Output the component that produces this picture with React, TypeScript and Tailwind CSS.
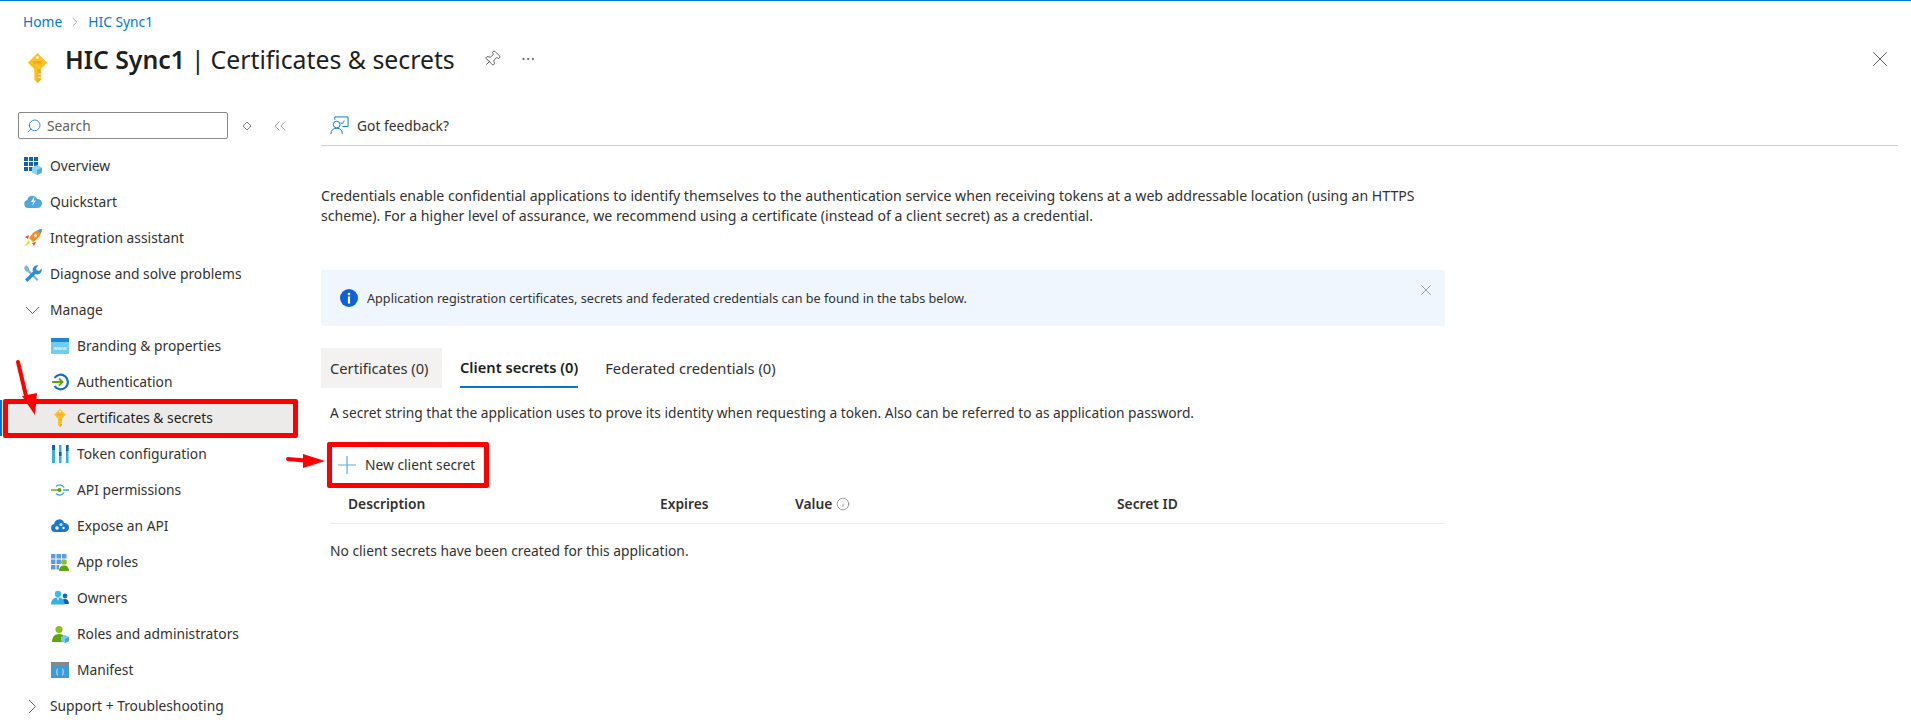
import { ChevronRight, ChevronsLeft, Info, MoreHorizontal, Pin, Search, X } from "lucide-react"
import type { ReactNode } from "react"

function KeyIcon({ className }: { className: string }) {
  return (
    <svg viewBox="0 0 18 28" className={className}>
      <path d="M9 0 L18 9 L12 15 V25 L9 28 L6 25 V15 L0 9 Z" fill="#fdc11f" />
      <path d="M9 15 H12 V25 L9 28 Z" fill="#f2a81d" />
      <path d="M12 19 H9.5 V20.5 H12 V22 H9.5 V23.5 H12 Z" fill="#fff" opacity="0.6" />
      <rect x="5" y="7.5" width="8" height="2.5" fill="#f2a81d" />
      <circle cx="9" cy="4.2" r="1.4" fill="#fff" />
    </svg>
  )
}

const icons: Record<string, ReactNode> = {
  overview: (
    <svg viewBox="0 0 18 18" className="h-[18px] w-[18px]">
      <path d="M0 0h4v4H0zM5 0h4v4H5zM10 0h4v4h-4zM0 5h4v4H0zM5 5h4v4H5zM10 5h4v4h-4zM0 10h4v4H0zM5 10h4v4H5z" fill="#0f5fb5" />
      <path d="M13 8l5 2.5v5L13 18l-5-2.5v-5z" fill="#8ed6ee" />
      <path d="M13 13l5-2.5v5L13 18z" fill="#50b0dc" />
    </svg>
  ),
  quickstart: (
    <svg viewBox="0 0 18 18" className="h-[18px] w-[18px]">
      <path d="M4 15a4 4 0 0 1-.6-7.9A5 5 0 0 1 13 6a4.5 4.5 0 0 1 1 9z" fill="#50a8d8" />
      <path d="M10.5 3 7 9h2.5L8 13l4-5.5H9.7z" fill="#fff" />
    </svg>
  ),
  rocket: (
    <svg viewBox="0 0 18 18" className="h-[18px] w-[18px]">
      <path d="M18 0c-4 .4-7 1.800-9.500 4.500L5 9l4 4 4.500-3.500C16.200 7 17.600 4 18 0z" fill="#f78d1e" />
      <path d="M18 0c-1.500.2-3 .6-4.200 1.300l2.900 2.900C17.400 3 17.800 1.500 18 0z" fill="#2f9fd8" />
      <circle cx="11.500" cy="6.500" r="1.500" fill="#fff" />
      <path d="M5 6 1 8l3 2zM12 13l-2 4-2-3z" fill="#d9541e" />
      <path d="M4.500 11.500 0 18l6.500-4.500z" fill="#fcd116" />
    </svg>
  ),
  wrench: (
    <svg viewBox="0 0 18 18" className="h-[18px] w-[18px]">
      <path d="M2 0 5 3v2L14.500 14.500 13 16 3.500 6.500H2L0 3z" fill="#78b4d8" />
      <path d="M17.500 3.500 15 6l-2.300-.7L12 3l2.500-2.500A4.500 4.500 0 0 0 9 6.500L1 14.500 3.500 17 11.500 9a4.500 4.500 0 0 0 6-5.500z" fill="#2f8fc8" />
    </svg>
  ),
  branding: (
    <svg viewBox="0 0 18 18" className="h-[18px] w-[18px]">
      <rect y="1" width="18" height="16" rx="1" fill="#6fcdf0" />
      <rect y="1" width="18" height="4" fill="#1f85d6" />
      <text x="9" y="13" textAnchor="middle" fontSize="6" fill="#fff" fontFamily="Liberation Sans, sans-serif">www</text>
    </svg>
  ),
  auth: (
    <svg viewBox="0 0 18 18" className="h-[18px] w-[18px]" fill="none">
      <path d="M3.500 5A7.300 7.300 0 1 1 3.500 13" stroke="#0f6fc6" strokeWidth="2.200" />
      <path d="M1 9h10M8 5.500 11.500 9 8 12.500" stroke="#5ea50a" strokeWidth="1.800" />
    </svg>
  ),
  key: <KeyIcon className="h-[18px] w-3" />,
  token: (
    <svg viewBox="0 0 18 18" className="h-[18px] w-[18px]">
      <path d="M1 0h3v18H1zM8 0h2.500v18H8zM15 0h2.500v18H15z" fill="#32b0e7" />
      <path d="M1 0h3v5H1zM8 7h2.500v4H8zM15 0h2.500v6H15z" fill="#0f5fb5" />
    </svg>
  ),
  api: (
    <svg viewBox="0 0 18 18" className="h-[18px] w-[18px]" fill="none">
      <path d="M0 9h8" stroke="#5ea50a" strokeWidth="1.400" />
      <path d="M12 9h6" stroke="#32a0d8" strokeWidth="1.400" />
      <circle cx="8.500" cy="9" r="2" fill="#5ea50a" />
      <path d="M5 5.500a5 5 0 0 1 8 1M5 12.500a5 5 0 0 0 8-1" stroke="#32a0d8" strokeWidth="1.300" />
    </svg>
  ),
  expose: (
    <svg viewBox="0 0 18 18" className="h-[18px] w-[18px]">
      <path d="M4 15a4 4 0 0 1-.8-7.900A5 5 0 0 1 13 6a4.500 4.500 0 0 1 1 9z" fill="#1a78d0" />
      <circle cx="6" cy="11" r="1.800" fill="#fff" />
      <circle cx="10" cy="7.500" r="1.600" fill="#bfe3f7" />
      <circle cx="12.500" cy="11" r="1.200" fill="#fff" />
    </svg>
  ),
  approles: (
    <svg viewBox="0 0 18 18" className="h-[18px] w-[18px]">
      <path d="M0 1h4.500v4.500H0zM5.500 1H10v4.500H5.500zM11 1h4.500v4.500H11zM0 6.500h4.500V11H0zM5.500 6.500H10V11H5.500zM0 12h4.500v4.500H0zM5.500 12H8v4.500H5.500z" fill="#5a9bec" />
      <circle cx="13" cy="9" r="2.800" fill="#86c21c" />
      <path d="M8 18c0-3.500 2-5.500 5-5.500s5 2 5 5.500z" fill="#5ea50a" />
    </svg>
  ),
  owners: (
    <svg viewBox="0 0 18 18" className="h-[18px] w-[18px]">
      <circle cx="14" cy="7" r="2.400" fill="#0f6fc6" />
      <path d="M10 15c0-3 1.500-5 4-5s4 2 4 5z" fill="#0f5fb5" />
      <circle cx="7" cy="5" r="3.200" fill="#38bdf0" />
      <path d="M0 15.500C0 11 2.500 8.500 7 8.500s6.500 2.500 6.500 7z" fill="#32b0e7" />
      <path d="M6 9h2l-1 3z" fill="#fff" />
    </svg>
  ),
  roles: (
    <svg viewBox="0 0 18 18" className="h-[18px] w-[18px]">
      <circle cx="8" cy="4.500" r="3.600" fill="#86c21c" />
      <path d="M1 17c0-5 2.500-8 7-8s7 3 7 8z" fill="#5ea50a" />
      <path d="M14 10l4 2v4l-4 2-4-2v-4z" fill="#72cdf0" />
      <path d="M14 14l4-2v4l-4 2z" fill="#38a8dc" />
    </svg>
  ),
  manifest: (
    <svg viewBox="0 0 18 18" className="h-[18px] w-[18px]">
      <rect y="1" width="18" height="16" fill="#3e9ad8" />
      <rect y="1" width="18" height="3.500" fill="#8a8886" />
      <path d="M7 8c-1 0-1 .5-1 1.500S6 11 5.500 11c.5 0 .5.500.5 1.500S6 14 7 14M11 8c1 0 1 .5 1 1.500s0 1.500.5 1.500c-.5 0-.5.500-.5 1.500S12 14 11 14" fill="none" stroke="#fff" strokeWidth=".8" />
    </svg>
  ),
}

type NavItem = { label: string; icon?: string; sub?: boolean; active?: boolean; caret?: "down" | "right" }

const navItems: NavItem[] = [
  { label: "Overview", icon: "overview" },
  { label: "Quickstart", icon: "quickstart" },
  { label: "Integration assistant", icon: "rocket" },
  { label: "Diagnose and solve problems", icon: "wrench" },
  { label: "Manage", caret: "down" },
  { label: "Branding & properties", icon: "branding", sub: true },
  { label: "Authentication", icon: "auth", sub: true },
  { label: "Certificates & secrets", icon: "key", sub: true, active: true },
  { label: "Token configuration", icon: "token", sub: true },
  { label: "API permissions", icon: "api", sub: true },
  { label: "Expose an API", icon: "expose", sub: true },
  { label: "App roles", icon: "approles", sub: true },
  { label: "Owners", icon: "owners", sub: true },
  { label: "Roles and administrators", icon: "roles", sub: true },
  { label: "Manifest", icon: "manifest", sub: true },
  { label: "Support + Troubleshooting", caret: "right" },
]

function NavRow({ item }: { item: NavItem }) {
  const indent = item.active ? "border-l-2 border-[#0078d4] bg-[#edebe9] pl-[48px]" : item.sub ? "pl-[50px]" : "pl-[23px]"
  return (
    <div className={`relative flex h-9 w-[298px] items-center ${indent}`}>
      <span className="mr-[8px] flex w-[19px] shrink-0 items-center justify-center">
        {item.caret === "down" && (
          <svg viewBox="0 0 15 15" className="h-[15px] w-[15px]" fill="none" stroke="#605e5c" strokeWidth="1">
            <path d="M1 4l6.500 6.500L14 4" />
          </svg>
        )}
        {item.caret === "right" && (
          <svg viewBox="0 0 15 15" className="h-[15px] w-[15px]" fill="none" stroke="#605e5c" strokeWidth="1">
            <path d="M4 1l6.500 6.500L4 14" />
          </svg>
        )}
        {item.icon && icons[item.icon]}
      </span>
      <span className={item.active ? "text-[#201f1e]" : "text-[#323130]"}>{item.label}</span>
      {item.active && (
        <div className="pointer-events-none absolute top-[-1px] left-[1px] h-[39px] w-[295px] rounded-[2px] border-[5px] border-[#ff0000]" />
      )}
    </div>
  )
}

export default function App() {
  return (
    <div className="flex h-screen flex-col overflow-hidden border-t border-[#0078d4] bg-white font-['Noto_Sans',sans-serif] text-[13.8px] leading-5 text-[#323130]">
      <div className="flex h-[36px] items-center gap-[6px] pt-[6px] pl-[23px] text-[#0078d4]">
        <span>Home</span>
        <ChevronRight className="h-[14px] w-[14px] text-[#605e5c]" strokeWidth={1} />
        <span>HIC Sync1</span>
      </div>

      <div className="flex h-[44px] items-center pr-[18px] pl-[27px]">
        <KeyIcon className="mt-[18px] mr-[17px] h-[30px] w-[21px]" />
        <h1 className="text-[24.8px] leading-8 whitespace-nowrap text-[#201f1e]">
          <span className="font-semibold">HIC Sync1</span>
          <span className="mx-[6px]">|</span>
          <span>Certificates &amp; secrets</span>
        </h1>
        <Pin className="ml-[28px] h-[18px] w-[18px] rotate-45 text-[#323130]" strokeWidth={1} />
        <MoreHorizontal className="ml-[19px] h-4 w-4 text-[#323130]" strokeWidth={1} />
        <X className="ml-auto h-[26px] w-[26px] text-[#323130]" strokeWidth={0.75} />
      </div>

      <div className="mt-[31px] flex flex-1">
        <aside className="w-[321px] shrink-0">
          <div className="mb-[9px] flex h-[27px] items-center pl-[18px]">
            <div className="flex h-[27px] w-[210px] items-center gap-[5px] rounded-[2px] border border-[#8a8886] pl-[7px] text-[#605e5c]">
              <Search className="h-[16px] w-[16px] -scale-x-100 text-[#0078d4]" strokeWidth={1.25} />
              <span>Search</span>
            </div>
            <svg viewBox="0 0 10 10" className="ml-[14px] h-[10px] w-[10px]" fill="none" stroke="#605e5c" strokeWidth=".8">
              <path d="M5 1 9 5 5 9 1 5z" />
            </svg>
            <ChevronsLeft className="ml-[18px] h-5 w-5 text-[#605e5c]" strokeWidth={0.75} />
          </div>
          <nav>
            {navItems.map((item) => (
              <NavRow key={item.label} item={item} />
            ))}
          </nav>
        </aside>

        <main className="w-[1577px]">
          <div className="flex h-[34px] items-start gap-[8px] border-b border-[#d2d0ce] pt-[4px] pl-[9px]">
            <svg viewBox="0 0 20 20" className="h-[19px] w-[19px]" fill="none" stroke="#0078d4" strokeWidth="1">
              <path d="M5 4V1h14v10h-6M15 5l-2 3-2-1" />
              <circle cx="7" cy="9" r="3.500" />
              <path d="M1 19c0-4 2-6 6-6s6 2 6 6" />
            </svg>
            <span>Got feedback?</span>
          </div>

          <p className="mt-[40px] w-[1124px] text-[14.1px]">
            Credentials enable confidential applications to identify themselves to the authentication service when receiving tokens at a web addressable location (using an HTTPS scheme). For a higher level of assurance, we recommend using a certificate (instead of a client secret) as a credential.
          </p>

          <div className="mt-[44px] flex h-14 w-[1124px] items-center rounded-[2px] bg-[#eff6fe] pr-[10px] pl-[19px] text-[12.65px]">
            <svg viewBox="0 0 18 18" className="mr-[9px] h-[18px] w-[18px]">
              <circle cx="9" cy="9" r="9" fill="#0f62d6" />
              <circle cx="9" cy="5" r="1.300" fill="#fff" />
              <rect x="7.900" y="7.500" width="2.200" height="7" fill="#fff" />
            </svg>
            <span>Application registration certificates, secrets and federated credentials can be found in the tabs below.</span>
            <X className="mb-[16px] ml-auto h-[18px] w-[18px] text-[#605e5c]" strokeWidth={0.75} />
          </div>

          <div className="mt-[22px] flex text-[14.7px]">
            <div className="flex h-10 w-[121px] items-center bg-[#f3f2f1] pl-[9px]">Certificates (0)</div>
            <div className="ml-[18px] flex h-10 items-center border-b-2 border-[#0078d4] font-semibold text-[#201f1e]">Client secrets (0)</div>
            <div className="ml-[27px] flex h-10 items-center">Federated credentials (0)</div>
          </div>

          <p className="mt-[15px] pl-[9px] text-[13.75px]">
            A secret string that the application uses to prove its identity when requesting a token. Also can be referred to as application password.
          </p>

          <div className="mt-[19px] ml-[6px] flex h-[46px] w-[162px] items-center gap-[9px] rounded-[2px] border-[5px] border-[#ff0000] pl-[6px]">
            <svg viewBox="0 0 18 18" className="h-[18px] w-[18px]" fill="none" stroke="#5ca9e5" strokeWidth="1.200">
              <path d="M9 0v18M0 9h18" />
            </svg>
            <span>New client secret</span>
          </div>

          <div className="ml-[9px] w-[1115px]">
            <div className="flex h-9 items-center border-b border-[#edebe9] pb-[4px] pl-[18px] font-semibold">
              <span className="w-[312px]">Description</span>
              <span className="w-[135px]">Expires</span>
              <span className="flex w-[322px] items-center gap-1">
                Value
                <Info className="h-[14px] w-[14px] text-[#605e5c]" strokeWidth={1} />
              </span>
              <span>Secret ID</span>
            </div>
            <p className="pt-[17px]">No client secrets have been created for this application.</p>
          </div>
        </main>
      </div>

      {/* hand-drawn annotation arrows */}
      <svg className="pointer-events-none absolute top-0 left-0 h-[727px] w-[1911px]" viewBox="0 0 1911 727">
        <path d="M18 362 L27 400" stroke="#ff0000" strokeWidth="4" strokeLinecap="round" fill="none" />
        <path d="M22 396 L37 393 L35 415 Z" fill="#ff0000" />
        <path d="M288 459 L310 461" stroke="#ff0000" strokeWidth="4" strokeLinecap="round" fill="none" />
        <path d="M303 454 L325 461 L303 468 Z" fill="#ff0000" />
      </svg>
    </div>
  )
}
